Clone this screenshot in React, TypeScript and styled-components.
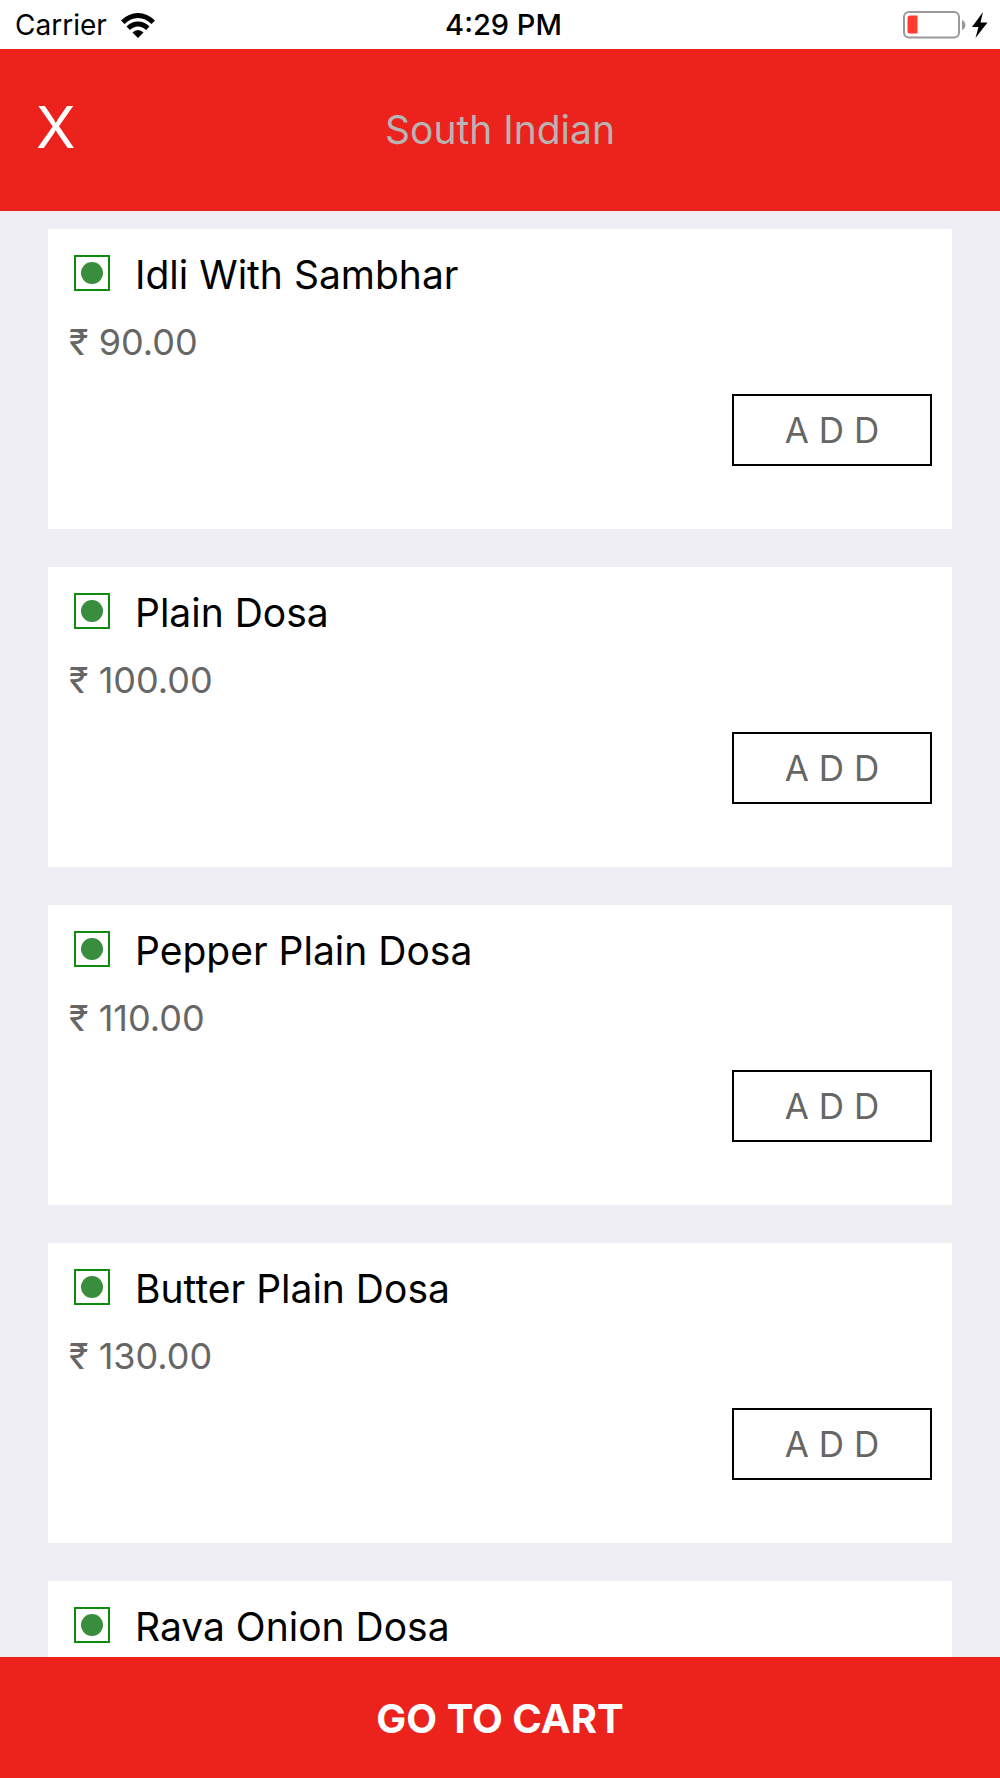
import React from "react";
import styled, { createGlobalStyle } from "styled-components";

const RED = "#ec221c";

const GlobalStyle = createGlobalStyle`
  *, *::before, *::after { box-sizing: border-box; }
  body {
    margin: 0;
    background: #efeef4;
    font-family: Inter, "Liberation Sans", sans-serif;
    color: #000;
  }
  button { font-family: inherit; cursor: pointer; }
`;

const Screen = styled.div`
  display: flex;
  flex-direction: column;
  height: 100vh;
`;

const StatusBar = styled.div`
  flex: none;
  display: grid;
  grid-template-columns: 1fr auto 1fr;
  align-items: center;
  padding: 8px 12px 7px 15px;
  background: #fff;
  font-size: 28px;
  line-height: 34px;
`;

const StatusGroup = styled.div<{ $end?: boolean }>`
  display: flex;
  align-items: center;
  justify-content: ${(p) => (p.$end ? "flex-end" : "flex-start")};
  gap: ${(p) => (p.$end ? 6 : 14)}px;
`;

const Clock = styled.time`
  padding-left: 4px;
  font-size: 29px;
  font-weight: 500;
`;

const Header = styled.header`
  flex: none;
  display: grid;
  grid-template-columns: 1fr auto 1fr;
  align-items: center;
  padding: 38px 36px 44px;
  background: ${RED};
`;

const CloseButton = styled.button`
  justify-self: start;
  padding: 0;
  border: 0;
  background: none;
  color: #fff;
  font-size: 58px;
  line-height: 80px;
`;

const Title = styled.h1`
  margin: 0;
  padding-top: 6px;
  color: #b9b4b4;
  font-size: 39px;
  font-weight: 400;
  line-height: 74px;
`;

const Menu = styled.ul`
  flex: 1;
  min-height: 0;
  margin: 0;
  padding: 18px 48px;
  list-style: none;
  display: flex;
  flex-direction: column;
  gap: 38px;
  overflow-y: auto;
  scrollbar-width: none;
`;

const Card = styled.li`
  flex: none;
  display: flex;
  flex-direction: column;
  padding: 20px 20px 63px 21px;
  background: #fff;
`;

const ItemHeading = styled.div`
  display: flex;
  align-items: flex-start;
  gap: 25px;
  padding-left: 5px;
`;

const VegMark = styled.span`
  flex: none;
  display: grid;
  place-items: center;
  width: 36px;
  height: 36px;
  margin-top: 6px;
  border: 2px solid #118a11;

  &::before {
    content: "";
    width: 22px;
    height: 22px;
    border-radius: 50%;
    background: #388e3c;
  }
`;

const ItemName = styled.h2`
  margin: 0;
  font-size: 39px;
  font-weight: 400;
  line-height: 52px;
`;

const Price = styled.p`
  margin: 19px 0 0;
  color: #666;
  font-size: 36px;
  line-height: 44px;
`;

const AddButton = styled.button`
  align-self: flex-end;
  width: 200px;
  height: 72px;
  margin-top: 30px;
  padding: 0;
  border: 2px solid #000;
  background: #fff;
  color: #666;
  font-size: 35px;
`;

const CartButton = styled.button`
  flex: none;
  padding: 37px 0 34px;
  border: 0;
  background: ${RED};
  color: #fff;
  font-size: 40px;
  font-weight: 700;
  line-height: 50px;
`;

interface MenuItem {
  name: string;
  price?: number;
}

const items: MenuItem[] = [
  { name: "Idli With Sambhar", price: 90 },
  { name: "Plain Dosa", price: 100 },
  { name: "Pepper Plain Dosa", price: 110 },
  { name: "Butter Plain Dosa", price: 130 },
  { name: "Rava Onion Dosa" },
];

const WifiIcon = () => (
  <svg width="34" height="25" viewBox="0 0 34 25" aria-label="Wi-Fi">
    <path d="M0 7.500Q7.500 0 17 0T34 7.500L30.500 11Q24.500 5 17 5T3.500 11Z" />
    <path d="M5.500 13.500Q10.500 8.500 17 8.500T28.500 13.500L25 17Q21.500 13.500 17 13.500T9 17Z" />
    <path d="M11.500 19.500Q14 17 17 17T22.500 19.500L17 25Z" />
  </svg>
);

const BatteryIcon = () => (
  <svg width="63" height="28" viewBox="0 0 63 28" aria-label="Battery low">
    <rect x="1" y="1" width="55" height="25.5" rx="5" fill="#fff" stroke="#999" strokeWidth="2" />
    <path d="M7 4.500h7.500v18H7a2.500 2.500 0 0 1-2.500-2.500V7A2.500 2.500 0 0 1 7 4.500Z" fill="#ff3b30" />
    <path d="M59 9c4.500 1.500 4.500 8.500 0 10Z" fill="#999" />
  </svg>
);

const BoltIcon = () => (
  <svg width="16" height="26" viewBox="0 0 16 26" aria-label="Charging">
    <path d="M11 0 0 15h6.500L3.500 26 15.500 10.500H8.500Z" />
  </svg>
);

export default function App() {
  return (
    <>
      <GlobalStyle />
      <Screen>
        <StatusBar>
          <StatusGroup>
            Carrier
            <WifiIcon />
          </StatusGroup>
          <Clock>4:29 PM</Clock>
          <StatusGroup $end>
            <BatteryIcon />
            <BoltIcon />
          </StatusGroup>
        </StatusBar>
        <Header>
          <CloseButton type="button">X</CloseButton>
          <Title>South Indian</Title>
        </Header>
        <Menu>
          {items.map((item) => (
            <Card key={item.name}>
              <ItemHeading>
                <VegMark />
                <ItemName>{item.name}</ItemName>
              </ItemHeading>
              {item.price !== undefined && (
                <>
                  <Price>₹ {item.price.toFixed(2)}</Price>
                  <AddButton type="button">A D D</AddButton>
                </>
              )}
            </Card>
          ))}
        </Menu>
        <CartButton type="button">GO TO CART</CartButton>
      </Screen>
    </>
  );
}
